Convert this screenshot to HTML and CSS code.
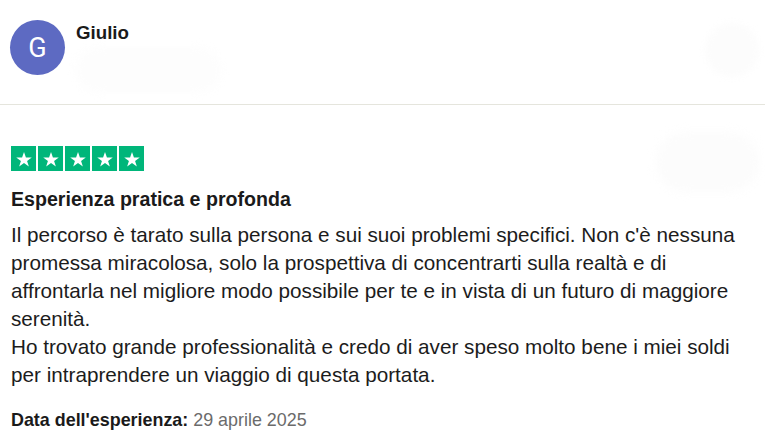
FILE: index.html
```html
<!DOCTYPE html>
<html lang="it">
<head>
<meta charset="utf-8">
<link rel="stylesheet" href="styles.css">
</head>
<body>
<div class="card">
  <header class="consumer">
    <div class="avatar">G</div>
    <div class="who">
      <div class="name">Giulio</div>
      <div class="meta-blur"></div>
    </div>
    <div class="menu-blur"></div>
  </header>
  <section class="review">
    <div class="rating-row">
      <div class="stars" aria-label="5 stelle">
        <span class="star"><svg viewBox="0 0 24 24"><path d="M12 3.6l2.3 6.6h7l-5.6 4.1 2.1 6.7L12 16.9 6.2 21l2.1-6.7-5.6-4.1h7z" fill="#fff"/></svg></span>
        <span class="star"><svg viewBox="0 0 24 24"><path d="M12 3.6l2.3 6.6h7l-5.6 4.1 2.1 6.7L12 16.9 6.2 21l2.1-6.7-5.6-4.1h7z" fill="#fff"/></svg></span>
        <span class="star"><svg viewBox="0 0 24 24"><path d="M12 3.6l2.3 6.6h7l-5.6 4.1 2.1 6.7L12 16.9 6.2 21l2.1-6.7-5.6-4.1h7z" fill="#fff"/></svg></span>
        <span class="star"><svg viewBox="0 0 24 24"><path d="M12 3.6l2.3 6.6h7l-5.6 4.1 2.1 6.7L12 16.9 6.2 21l2.1-6.7-5.6-4.1h7z" fill="#fff"/></svg></span>
        <span class="star"><svg viewBox="0 0 24 24"><path d="M12 3.6l2.3 6.6h7l-5.6 4.1 2.1 6.7L12 16.9 6.2 21l2.1-6.7-5.6-4.1h7z" fill="#fff"/></svg></span>
      </div>
      <div class="badge-blur"></div>
    </div>
    <h2 class="title">Esperienza pratica e profonda</h2>
    <p class="text">Il percorso è tarato sulla persona e sui suoi problemi specifici. Non c'è nessuna promessa miracolosa, solo la prospettiva di concentrarti sulla realtà e di affrontarla nel migliore modo possibile per te e in vista di un futuro di maggiore serenità.<br>Ho trovato grande professionalità e credo di aver speso molto bene i miei soldi per intraprendere un viaggio di questa portata.</p>
    <p class="date"><b>Data dell'esperienza:</b> 29 aprile 2025</p>
  </section>
</div>
</body>
</html>
```
FILE: styles.css
```css
* { box-sizing: border-box; }
html, body { margin: 0; padding: 0; background: #fff; }
body {
  font-family: "Liberation Sans", Arial, sans-serif;
  color: #1c1c1c;
  width: 765px;
  height: 446px;
  overflow: hidden;
}
.consumer {
  position: relative;
  display: flex;
  align-items: flex-start;
  gap: 11px;
  padding: 20px 10px 0 10px;
  height: 105px;
  border-bottom: 1px solid #e5e5dd;
}
.avatar {
  width: 55px;
  height: 55px;
  border-radius: 50%;
  background: #5d6ac2;
  color: #fff;
  font-family: Roboto, "Liberation Sans", sans-serif;
  font-size: 27px;
  display: flex;
  align-items: center;
  justify-content: center;
  flex: none;
}
.who { padding-top: 1px; }
.name {
  font-weight: 700;
  font-size: 18.7px;
  line-height: 24px;
  color: #1a1a1a;
}
.meta-blur {
  margin-top: 2px;
  width: 145px;
  height: 46px;
  border-radius: 40px;
  background: #fdfdfd;
  filter: blur(4px);
}
.menu-blur {
  position: absolute;
  right: 6px;
  top: 23px;
  width: 54px;
  height: 54px;
  border-radius: 50%;
  background: #fcfcfc;
  filter: blur(3px);
}
.review { padding: 41px 11px 0 11px; }
.rating-row {
  display: flex;
  justify-content: space-between;
  align-items: flex-start;
}
.stars { display: flex; gap: 2px; }
.star {
  width: 25px;
  height: 25px;
  background: #00b67a;
  display: flex;
  align-items: center;
  justify-content: center;
}
.star svg { width: 20px; height: 20px; display: block; }
.badge-blur {
  width: 103px;
  height: 60px;
  margin-top: -14px;
  margin-right: -5px;
  border-radius: 30px;
  background: #fcfcfc;
  filter: blur(4px);
}
.title {
  margin: -6px 0 0 0;
  font-size: 19.6px;
  font-weight: 700;
  line-height: 26px;
  color: #1a1a1a;
}
.text {
  margin: 9px 0 0 0;
  font-size: 20.7px;
  line-height: 28px;
  color: #1c1c1c;
}
.date {
  margin: 20px 0 0 0;
  font-size: 17.9px;
  line-height: 22px;
  color: #6b6b6b;
}
.date b { color: #1a1a1a; }
```
